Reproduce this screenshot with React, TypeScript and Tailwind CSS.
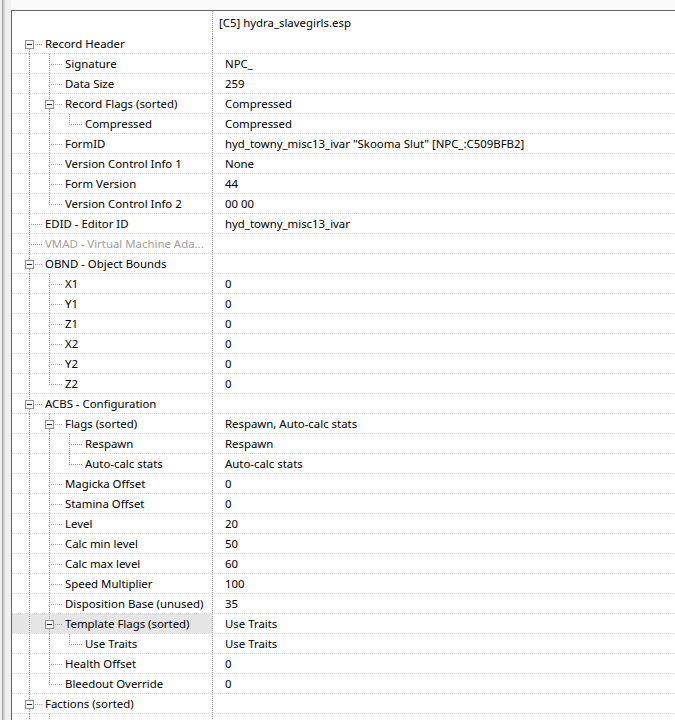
import React from 'react';

type Node = {
  label: string;
  value?: string;
  grey?: boolean;
  hl?: boolean;
  children?: Node[];
};

type Row = {
  label: string;
  value: string;
  level: number;
  guides: boolean[];
  box: boolean;
  last: boolean;
  first: boolean;
  grey?: boolean;
  hl?: boolean;
};

const tree: Node[] = [
  {
    label: 'Record Header',
    children: [
      { label: 'Signature', value: 'NPC_' },
      { label: 'Data Size', value: '259' },
      {
        label: 'Record Flags (sorted)',
        value: 'Compressed',
        children: [{ label: 'Compressed', value: 'Compressed' }],
      },
      { label: 'FormID', value: 'hyd_towny_misc13_ivar "Skooma Slut" [NPC_:C509BFB2]' },
      { label: 'Version Control Info 1', value: 'None' },
      { label: 'Form Version', value: '44' },
      { label: 'Version Control Info 2', value: '00 00' },
    ],
  },
  { label: 'EDID - Editor ID', value: 'hyd_towny_misc13_ivar' },
  { label: 'VMAD - Virtual Machine Ada...', grey: true },
  {
    label: 'OBND - Object Bounds',
    children: ['X1', 'Y1', 'Z1', 'X2', 'Y2', 'Z2'].map((l) => ({ label: l, value: '0' })),
  },
  {
    label: 'ACBS - Configuration',
    children: [
      {
        label: 'Flags (sorted)',
        value: 'Respawn, Auto-calc stats',
        children: [
          { label: 'Respawn', value: 'Respawn' },
          { label: 'Auto-calc stats', value: 'Auto-calc stats' },
        ],
      },
      { label: 'Magicka Offset', value: '0' },
      { label: 'Stamina Offset', value: '0' },
      { label: 'Level', value: '20' },
      { label: 'Calc min level', value: '50' },
      { label: 'Calc max level', value: '60' },
      { label: 'Speed Multiplier', value: '100' },
      { label: 'Disposition Base (unused)', value: '35' },
      {
        label: 'Template Flags (sorted)',
        value: 'Use Traits',
        hl: true,
        children: [{ label: 'Use Traits', value: 'Use Traits' }],
      },
      { label: 'Health Offset', value: '0' },
      { label: 'Bleedout Override', value: '0' },
    ],
  },
  {
    label: 'Factions (sorted)',
    children: [
      { label: 'SNAM - Faction', value: '', children: [{ label: 'Faction', value: '' }] },
      { label: 'SNAM - Faction', value: '' },
    ],
  },
  { label: 'INAM - Death item' },
];

function flatten(nodes: Node[], level: number, guides: boolean[], out: Row[]) {
  nodes.forEach((n, i) => {
    const last = i === nodes.length - 1;
    out.push({
      label: n.label,
      value: n.value ?? '',
      level,
      guides,
      box: !!n.children,
      last,
      first: level === 0 && i === 0,
      grey: n.grey,
      hl: n.hl,
    });
    if (n.children) flatten(n.children, level + 1, [...guides, !last], out);
  });
  return out;
}

const rows = flatten(tree, 0, [], []);

const LINE = '#a0a0a0';

// dotted tree connectors + expand box for one row
function Guides({ row }: { row: Row }) {
  const w = 33 + 20 * row.level;
  const cx = 17.5 + 20 * row.level;
  return (
    <svg width={w} height={20} className="shrink-0 self-start overflow-visible" shapeRendering="crispEdges">
      <g stroke={LINE} strokeWidth={1} strokeDasharray="1 1" fill="none">
        {row.guides.map((g, k) =>
          g ? <line key={k} x1={17.5 + 20 * k} y1={0} x2={17.5 + 20 * k} y2={20} /> : null,
        )}
        {row.box ? (
          <>
            {!row.first && <line x1={cx} y1={0} x2={cx} y2={6} />}
            {!row.last && <line x1={cx} y1={15} x2={cx} y2={20} />}
            <line x1={cx + 5} y1={10.5} x2={cx + 12.5} y2={10.5} />
          </>
        ) : (
          <>
            <line x1={cx} y1={0} x2={cx} y2={row.last ? 11 : 20} />
            <line x1={cx - 0.5} y1={10.5} x2={cx + 12.5} y2={10.5} />
          </>
        )}
      </g>
      {row.box && (
        <g>
          <rect x={cx - 4} y={6.5} width={8} height={8} fill="#fdfdfd" stroke="#919191" />
          <line x1={cx - 2.5} y1={10.5} x2={cx + 2.5} y2={10.5} stroke="#1e1e3c" />
        </g>
      )}
    </svg>
  );
}

export default function App() {
  return (
    <div className="flex h-[720px] w-[675px] overflow-hidden bg-[#f0f0f0] font-['Noto_Sans',sans-serif] text-[11.4px] text-black">
      <div className="flex w-[11px] shrink-0">
        <div className="w-[2px]" />
        <div className="w-px bg-[#a0a0a0]" />
        <div className="w-[2px] bg-[#d2d2d2]" />
      </div>
      <div className="flex min-w-0 flex-1 flex-col">
        <div className="h-[10px] shrink-0 bg-[#f9f9f9]" />
        <div className="flex-1 border-l border-t border-[#646464] bg-white">
          <div className="flex h-[23px]">
            <div className="w-[200px] shrink-0" />
            <div className="flex flex-1 items-center border-l border-dotted border-[#a8a8a8] pl-[6px]">
              [C5] hydra_slavegirls.esp
            </div>
          </div>
          {rows.map((r, i) => (
            <div key={i} className="flex h-[20px] border-b border-dotted border-[#d8d8d8]">
              <div
                className={`flex w-[200px] shrink-0 items-center whitespace-nowrap ${r.hl ? 'bg-[#e5e5e5]' : ''} ${
                  r.grey ? 'text-[#a0a0a0]' : ''
                }`}
              >
                <Guides row={r} />
                <span>{r.label}</span>
              </div>
              <div className="flex flex-1 items-center whitespace-nowrap border-l border-dotted border-[#a8a8a8] pl-[12px]">
                {r.value}
              </div>
            </div>
          ))}
        </div>
      </div>
    </div>
  );
}
